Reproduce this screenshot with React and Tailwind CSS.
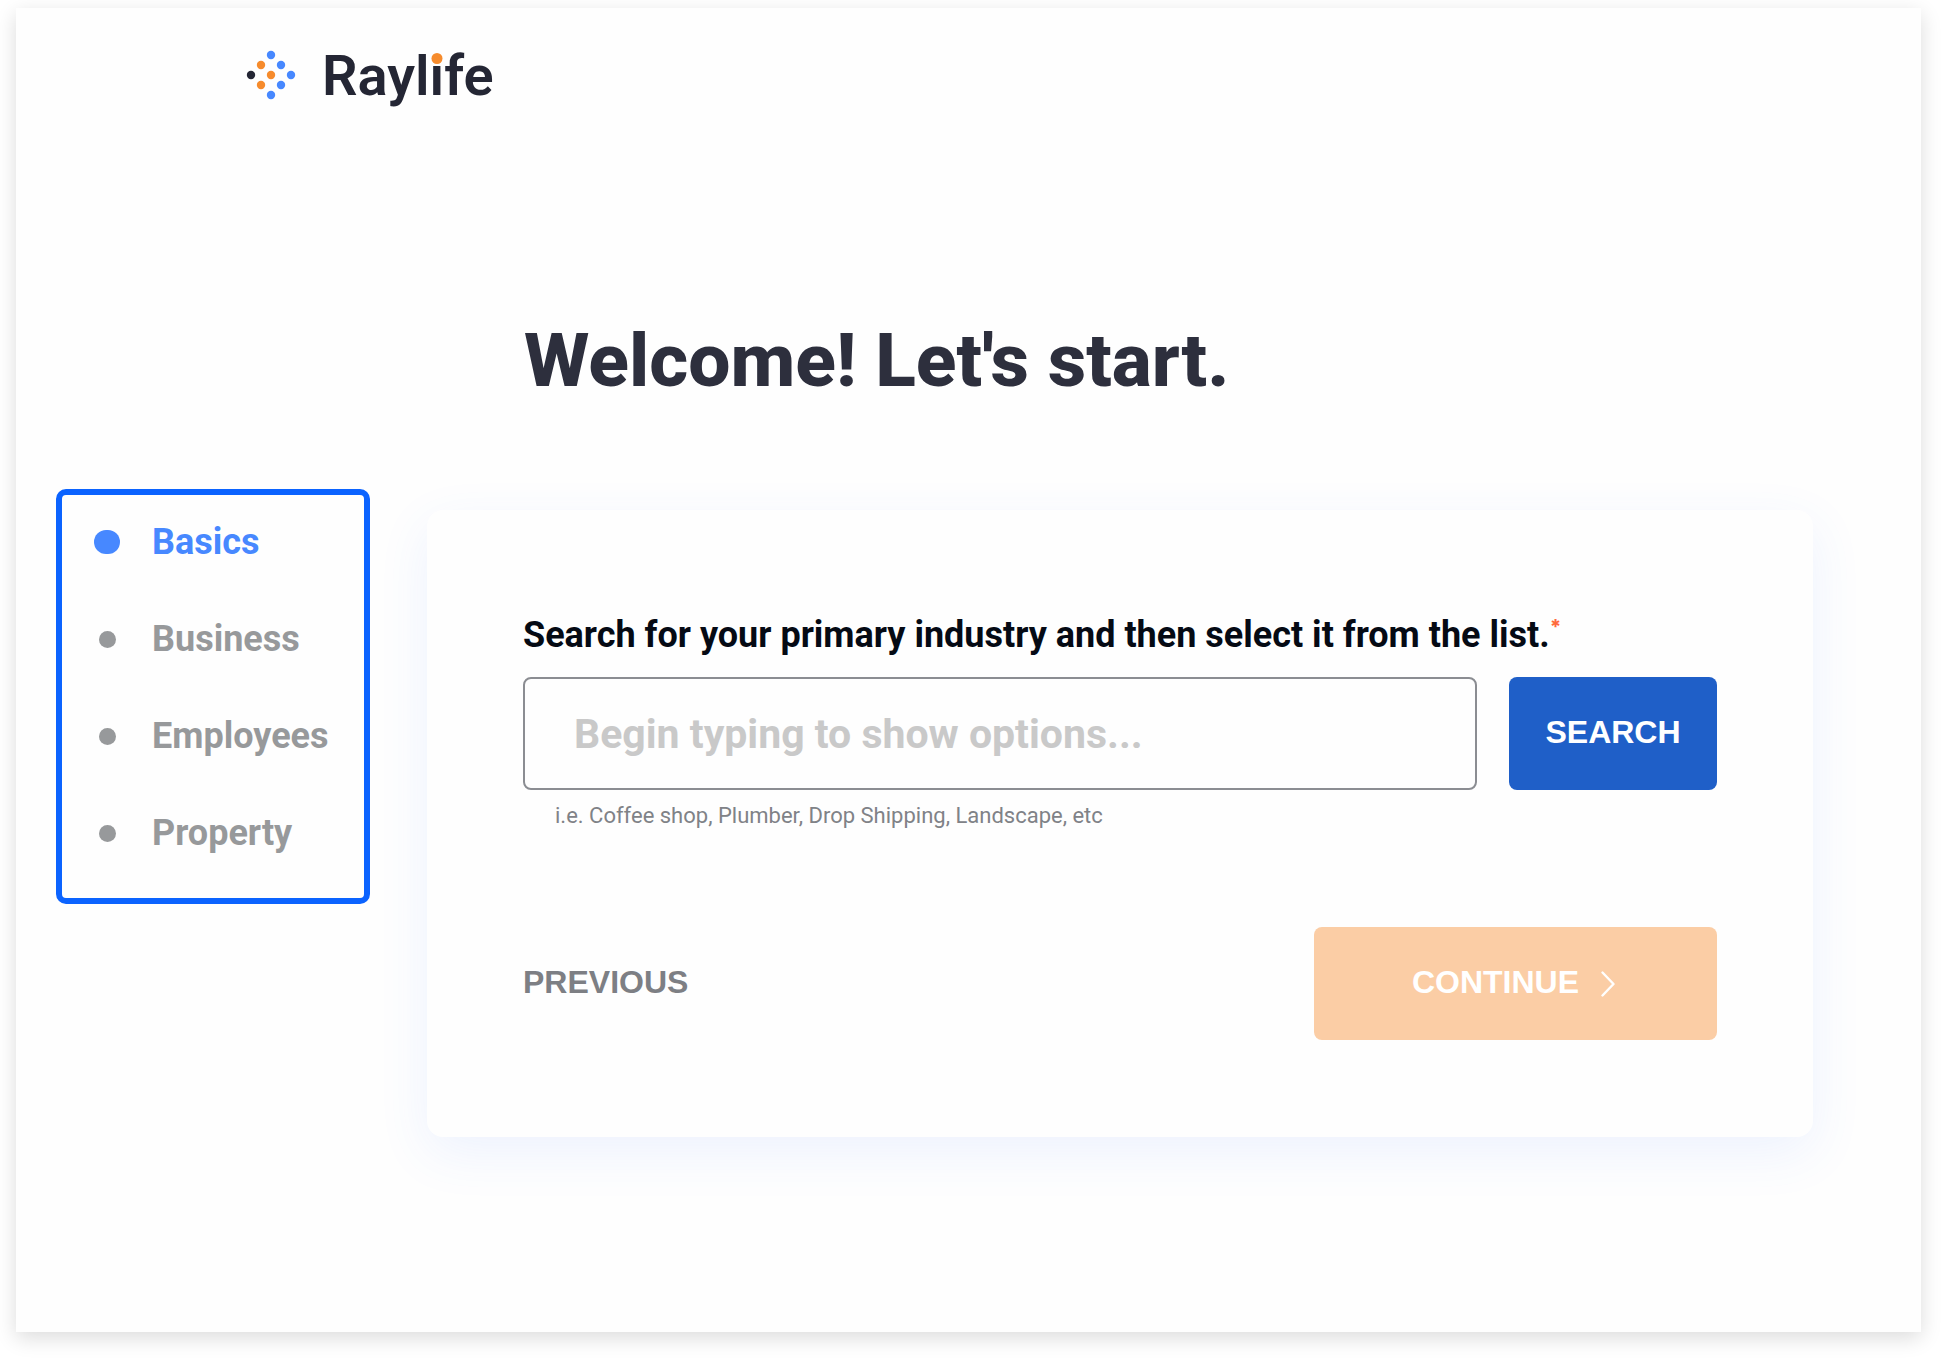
const steps = ["Basics", "Business", "Employees", "Property"];

const logoDots = [
  { cx: 25, cy: 5, fill: "#4788ff" },
  { cx: 15, cy: 15, fill: "#f68b2c" },
  { cx: 35, cy: 15, fill: "#4788ff" },
  { cx: 5, cy: 25, fill: "#242634" },
  { cx: 25, cy: 25, fill: "#f68b2c" },
  { cx: 45, cy: 25, fill: "#4788ff" },
  { cx: 15, cy: 35, fill: "#f68b2c" },
  { cx: 35, cy: 35, fill: "#4788ff" },
  { cx: 25, cy: 45, fill: "#4788ff" },
];

function Logo() {
  return (
    <a href="#" className="flex w-fit items-center gap-[26px]">
      <svg viewBox="0 0 50 50" className="size-[50px]" aria-hidden="true">
        {logoDots.map((d) => (
          <circle key={`${d.cx}-${d.cy}`} cx={d.cx} cy={d.cy} r="4.2" fill={d.fill} />
        ))}
      </svg>
      <span className="pt-[2px] text-[56px] leading-[62px] font-semibold text-[#242634]">
        Rayl
        <span className="relative">
          i
          <span className="absolute top-[10px] left-1/2 size-[11px] -translate-x-1/2 rounded-full bg-[#f68b2c]" />
        </span>
        fe
      </span>
    </a>
  );
}

function Steps() {
  return (
    <nav
      aria-label="Application steps"
      className="w-[314px] shrink-0 rounded-[10px] border-6 border-[#0b63ff] pt-[23px] pb-[41px] pl-8"
    >
      <ul className="flex flex-col gap-[49px]">
        {steps.map((step, i) => (
          <li key={step}>
            <a
              href="#"
              aria-current={i === 0 ? "step" : undefined}
              className={
                i === 0
                  ? "flex items-center gap-8 text-[#4788ff]"
                  : "flex items-center gap-8 text-[#97999b]"
              }
            >
              <span className="flex w-[26px] shrink-0 justify-center">
                <span
                  className={
                    i === 0
                      ? "h-6 w-[26px] rounded-full bg-current"
                      : "size-[17px] rounded-full bg-current"
                  }
                />
              </span>
              <span className="text-4xl leading-[48px] font-bold">{step}</span>
            </a>
          </li>
        ))}
      </ul>
    </nav>
  );
}

function IndustryForm() {
  return (
    <form
      onSubmit={(e) => e.preventDefault()}
      className="mt-[21px] min-w-0 flex-1 rounded-2xl bg-[#fefefe] px-24 pt-[101px] pb-[97px] shadow-[0_16px_52px_rgba(71,120,255,0.09)]"
    >
      <label
        htmlFor="industry"
        className="flex text-[36px] leading-[48px] font-bold whitespace-nowrap text-[#050a14]"
      >
        Search for your primary industry and then select it from the list.
        <span className="font-[Inter] text-xl leading-8 font-extrabold text-[#ff6a3d]">*</span>
      </label>
      <div className="mt-[18px] flex gap-8">
        <input
          id="industry"
          type="text"
          aria-describedby="industry-hint"
          placeholder="Begin typing to show options..."
          className="h-[113px] min-w-0 flex-1 rounded-lg border-2 border-[#8b8d92] bg-transparent px-[49px] text-[41px] font-bold text-[#050a14] placeholder:text-[#c9c9c9]"
        />
        <button
          type="submit"
          className="w-[208px] rounded-lg bg-[#1f5fc8] pb-1 font-[Liberation_Sans] text-[32px] font-bold text-white"
        >
          SEARCH
        </button>
      </div>
      <p id="industry-hint" className="mt-[10px] ml-8 text-[22px] leading-8 text-[#808287]">
        i.e. Coffee shop, Plumber, Drop Shipping, Landscape, etc
      </p>
      <div className="mt-[95px] flex items-center justify-between font-[Liberation_Sans] text-[32px] font-bold">
        <button type="button" className="pb-1 text-[#7d7f84]">
          PREVIOUS
        </button>
        <button
          type="button"
          className="flex h-[113px] w-[403px] items-center justify-center gap-[22px] rounded-lg bg-[#fbcda5] pr-1 pb-1 text-white"
        >
          CONTINUE
          <svg viewBox="0 0 14 26" className="mt-1 h-[26px] w-[14px]" fill="none" aria-hidden="true">
            <path
              d="M1.5 1.5 L12.5 13 L1.5 24.5"
              stroke="currentColor"
              strokeWidth="2.4"
              strokeLinecap="round"
              strokeLinejoin="round"
            />
          </svg>
        </button>
      </div>
    </form>
  );
}

export default function App() {
  return (
    <div className="flex min-h-screen flex-col bg-white pt-2 pr-8 pb-[39px] pl-4 font-[Roboto,sans-serif]">
      <div className="flex-1 bg-[#fefefe] pr-[108px] pl-10 shadow-[0_6px_20px_rgba(0,0,0,0.14)]">
        <header className="pt-[35px] pl-[190px]">
          <Logo />
        </header>
        <main className="pt-[211px]">
          <h1 className="pl-[468px] text-[75px] leading-[84px] font-extrabold text-[#2d2f3d]">
            Welcome! Let's start.
          </h1>
          <div className="mt-[87px] flex items-start gap-[57px]">
            <Steps />
            <IndustryForm />
          </div>
        </main>
      </div>
    </div>
  );
}
